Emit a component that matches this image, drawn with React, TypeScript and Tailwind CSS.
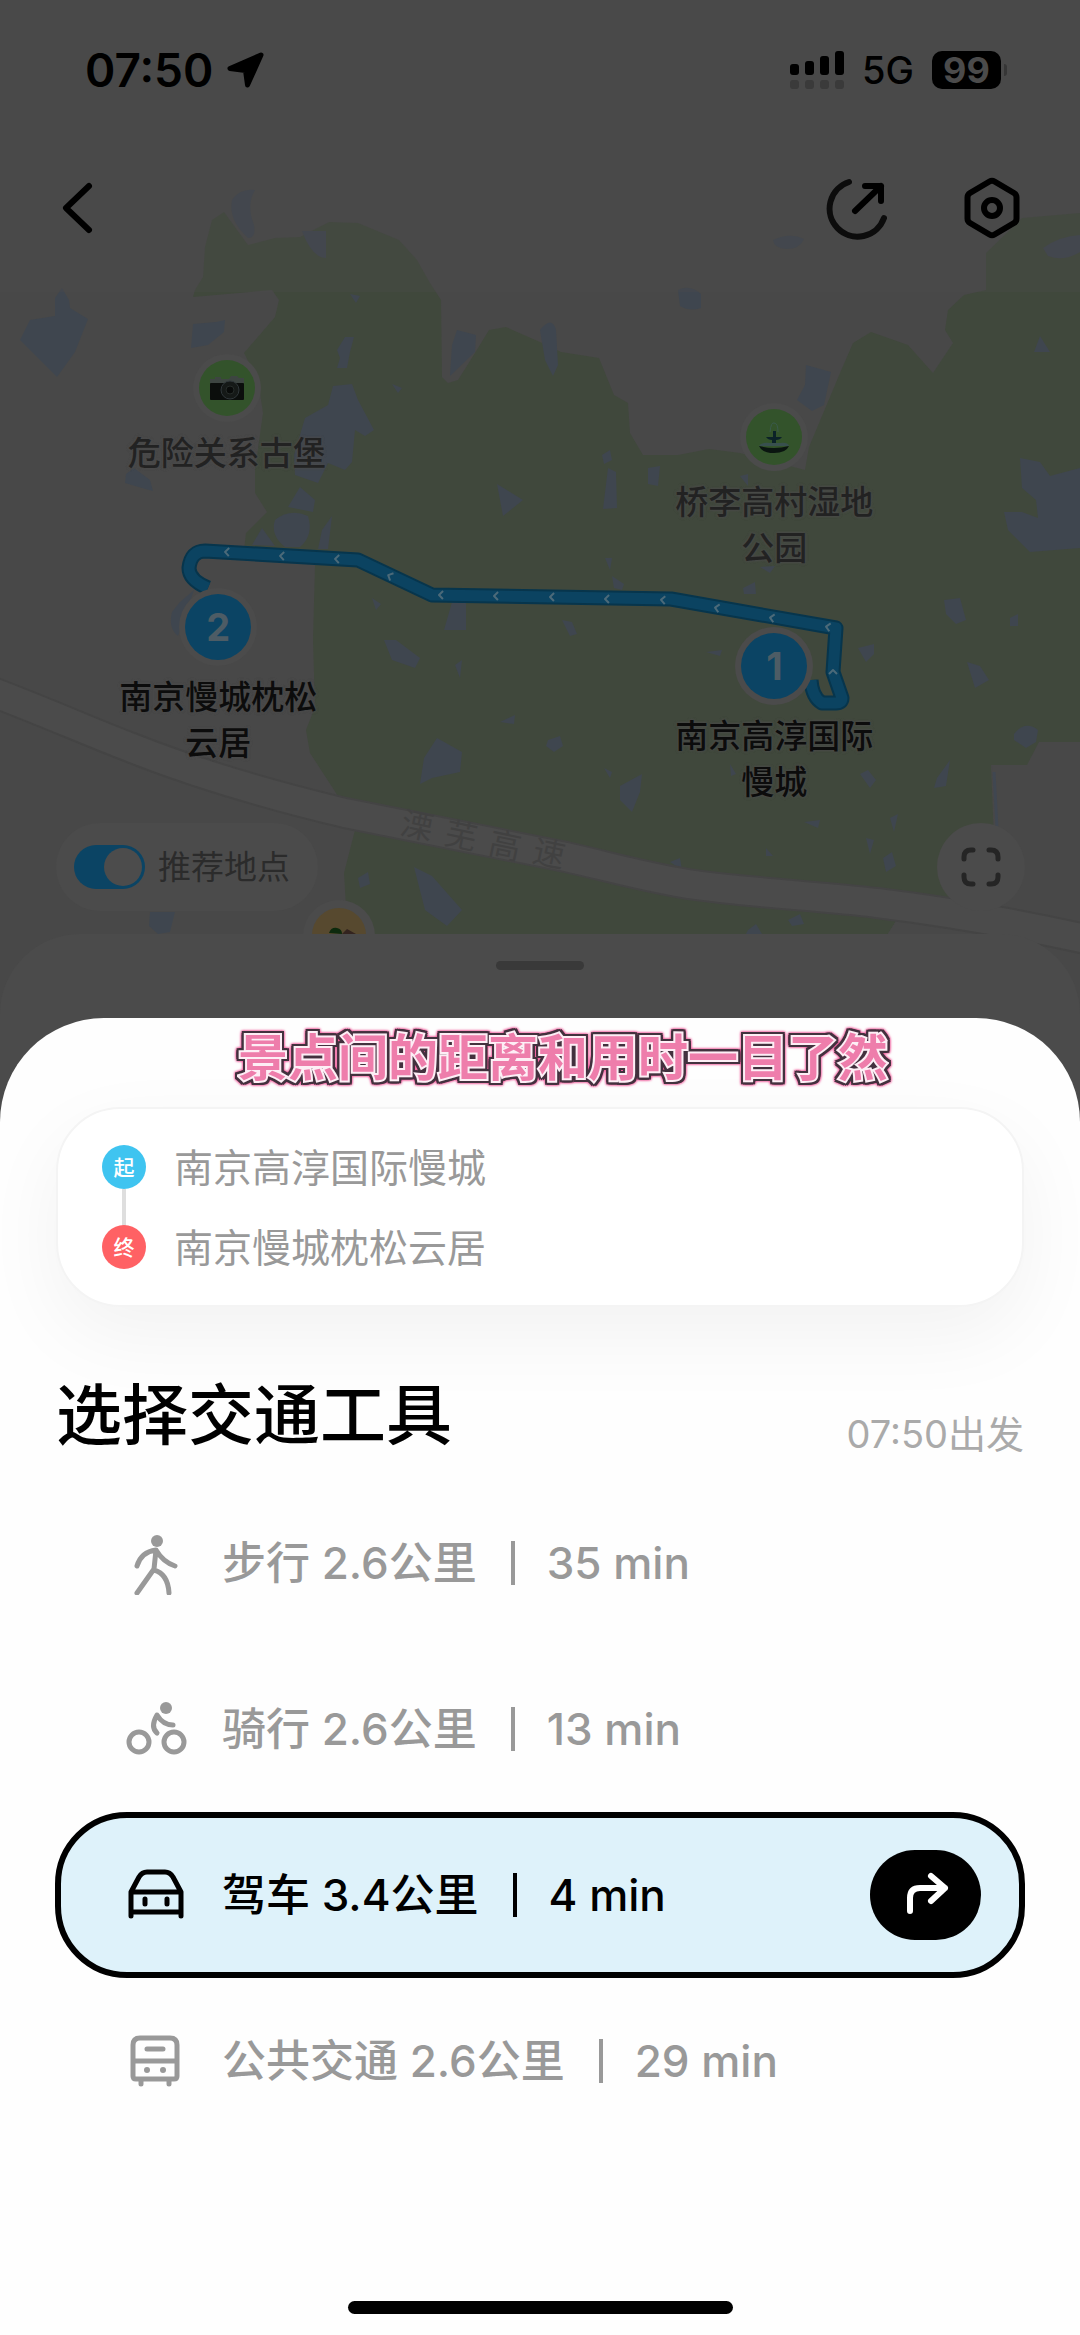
import React, { useState } from "react";

const WATER: string[] = [
  "M20 340 30 320 55 316 55 298 62 288 69 300 70 308 88 319 75 352 57 377Z",
  "M193 324 216 322 225 320 224 332 208 345 191 348Z",
  "M126 474 134 468 150 480 153 491 142 488 125 483Z",
  "M232 200Q240 188 255 190Q246 205 254 225Q256 238 248 238Q228 220 232 200Z",
  "M302 231H326V258Q312 258 302 231Z",
  "M773 240Q790 232 804 239Q800 249 786 249Q774 248 773 240Z",
  "M678 290Q690 284 701 294V308Q690 312 680 306Z",
  "M450 376 452 345 457 330 476 335 475 352Z",
  "M540 330Q552 315 556 330L558 365 553 376 545 360Z",
  "M806 365 831 372 824 405 812 411 797 400 805 385Z",
  "M337 350 345 337 354 337 350 352 347 368 337 368 340 358Z",
  "M333 386 352 384 358 400 374 430 365 436 355 430 352 462 345 470 328 463 318 483 295 475 294 455 305 418 328 405Z",
  "M300 487 315 500 313 512 288 507Z",
  "M275 520Q290 508 308 516Q314 535 300 547H285Q270 535 275 520Z",
  "M252 545 262 528 275 546Z",
  "M322 530 332 516 328 549 318 549Z",
  "M172 612 180 602 194 590 184 620 178 636Q168 628 172 612Z",
  "M392 384 402 388 398 393Z M350 294 360 296 356 303Z",
  "M497 484 523 500 503 516Z",
  "M372 598 381 604 376 610Z M452 602H466V630H444Z",
  "M384 640 396 640 420 658 415 668 392 660Z",
  "M455 665 462 660 460 678Z M500 722 515 715 514 724Z",
  "M437 738 462 752 460 772 432 778 420 784 424 758Z",
  "M414 867 432 876 462 910 447 926 425 910Z",
  "M358 878 368 872 370 884 360 888Z",
  "M602 455 610 450 612 460 604 464Z M608 468 616 472 617 508 603 509Z",
  "M648 468 660 466 658 486 648 484Z M740 476 748 474 748 486Z",
  "M605 558 612 558 610 570Z M612 576 624 584 622 590 614 588Z",
  "M743 588 755 582 756 594 744 594Z M760 567 775 566 770 573Z",
  "M562 620 572 622 577 634 570 636Z",
  "M1034 352 1040 336 1050 352Z",
  "M1020 458 1040 462 1050 476 1080 468V548L1030 552 1008 530 1004 512 1022 512 1038 518 1036 500 1022 488Z",
  "M944 600 960 598 966 620 956 624 946 614Z",
  "M1010 618 1018 614 1018 626 1010 626Z M706 652 722 650 720 656Z",
  "M858 648 874 644 874 654 866 662Z",
  "M967 662 980 666 989 680 975 688Z",
  "M1014 734Q1025 720 1038 730L1036 742 1026 748 1014 740Z",
  "M548 740 560 736 563 746 554 752 546 746Z",
  "M620 786 642 774 640 792 632 812 620 800Z",
  "M604 768 612 772 610 778Z M730 764 736 774 731 776Z",
  "M860 774 868 770 876 780 870 788Z M937 778 950 760 946 786 934 788Z",
  "M804 822 820 820 818 828Z M890 818 898 814 894 832Z M866 838 874 840 870 854Z",
  "M883 858 892 852 896 866 886 872Z M766 856 766 848 773 856Z M670 862 680 858 682 870Z",
  "M788 920 800 914 804 924 792 926Z M748 930 756 924 762 934H746Z",
  "M150 912H175L170 932 158 934 149 926Z",
  "M1043 248Q1060 236 1080 235V252Q1064 262 1048 256Z",
];

const ROAD =
  "M-10 691C60 718 90 732 132 748C200 775 270 795 345 813L566 857C610 867 640 876 688 884C750 893 820 896 877 903C950 912 1010 922 1090 940";

const ROUTE =
  "M208 588Q189 580 189 568Q191 551 205 551L358 560 432 595 671 599 836 628 833 672 842 698Q842 703 836 703H822Q812 697 811 680";

const CHEVRONS: [number, number, number][] = [
  [227, 552, 3], [282, 556, 3], [337, 559, 3], [390, 576, 25], [441, 595, 1],
  [496, 596, 1], [552, 597, 1], [607, 599, 1], [663, 600, 4], [717, 608, 10],
  [772, 618, 10], [828, 627, 10], [833, 672, 90],
];

function MapCanvas() {
  return (
    <svg
      viewBox="0 0 1080 1018"
      preserveAspectRatio="xMidYMin slice"
      className="absolute inset-0 h-full w-full"
      aria-hidden="true"
    >
      <rect width="1080" height="1018" fill="#484848" />
      <path
        d="M195 290 203 277 205 247 212 220 224 212 248 245 275 238 300 237 329 222 358 223 399 240 417 260 430 283 441 300 442 377 448 383 458 380 475 353 489 330 506 327 540 342 561 352 599 358 614 395 628 403 630 433 643 455 678 455 709 449 740 453 805 470 809 447 840 373 853 343 871 332 908 345 933 373 953 343 945 330 948 310 964 295 986 290V253L1022 218 1080 213V742H1039L1027 765H991L996 890 898 918 884 940H348L344 873 355 830 336 793 310 753 306 730 315 707 313 640 315 565 244 550 246 533 267 512 255 493V470L263 413 258 380 244 353 275 317 279 300 272 290 193 297Z"
        fill="#40483c"
      />
      <g fill="#3f464f">
        {WATER.map((d) => (
          <path key={d} d={d} />
        ))}
      </g>
      <path d="M992 765H1080V940H884L898 918 996 900Z" fill="#484848" />
      <path d="M994 772 997 828" stroke="#404751" strokeWidth="3" />
      <path d={ROAD} fill="none" stroke="#444" strokeWidth="32" />
      <path d={ROAD} fill="none" stroke="#4b4b4b" strokeWidth="28" />
      <g fontSize="32" fill="#414141" fontFamily='"Noto Sans CJK SC", sans-serif' textAnchor="middle">
        <text transform="translate(417 826) rotate(12)" y="11">溧</text>
        <text transform="translate(461 836) rotate(12)" y="11">芜</text>
        <text transform="translate(505 846) rotate(12)" y="11">高</text>
        <text transform="translate(549 854) rotate(12)" y="11">速</text>
      </g>
      <rect width="1080" height="292" fill="#4b4b4b" fillOpacity="0.3" />
      <g fill="none" strokeLinejoin="round">
        <path d={ROUTE} stroke="#07354c" strokeWidth="15" />
        <path d={ROUTE} stroke="#0b4361" strokeWidth="11" />
        {CHEVRONS.map(([x, y, r]) => (
          <path key={`${x}-${y}`} d="M2-4-2 0 2 4" transform={`translate(${x} ${y}) rotate(${r})`} stroke="#4c6a79" strokeWidth="2" />
        ))}
      </g>
      <circle cx="339" cy="936" r="36" fill="#4b4b4b" />
      <circle cx="339" cy="935" r="27" fill="#57492f" />
      <path d="M329 933Q331 927 337 928Q342 929 342 934Z" fill="#0d2a0d" />
      <path d="M342 934 347 929 356 934Z" fill="#33241f" />
    </svg>
  );
}

function Label({ lines, strong }: { lines: string[]; strong?: boolean }) {
  return (
    <div
      className={
        strong
          ? "text-center text-[33px] leading-[46px] font-medium text-[#0c0c0c] [text-shadow:0_0_3px_#4b4b4b,0_0_3px_#4b4b4b]"
          : "text-center text-[33px] leading-[46px] font-medium text-[#222] [text-shadow:0_0_3px_#4b4b4b,0_0_3px_#4b4b4b]"
      }
    >
      {lines.map((l) => (
        <div key={l} className="whitespace-nowrap">{l}</div>
      ))}
    </div>
  );
}

function Spot({ children }: { children: React.ReactNode }) {
  return (
    <div className="flex size-[68px] items-center justify-center rounded-full bg-[#4b4b4b]">
      <div className="flex size-14 items-center justify-center rounded-full bg-[#33532b]">{children}</div>
    </div>
  );
}

function Stop({ n }: { n: string }) {
  return (
    <div className="flex size-[78px] items-center justify-center rounded-full bg-[#4b4b4b]">
      <div className="flex size-[66px] items-center justify-center rounded-full bg-[#0b4464] text-[38px] leading-none font-bold text-[#4d5c65]">
        {n}
      </div>
    </div>
  );
}

function StatusBar() {
  return (
    <div className="flex h-[140px] items-center justify-between pr-[73px] pl-[85px] text-black">
      <div className="flex items-center gap-[14px]">
        <span className="text-[46px] leading-none font-semibold">07:50</span>
        <svg viewBox="0 0 38 38" className="size-[38px]" aria-label="定位">
          <path d="M34 4 3 17.500 18.500 19.500 20.500 34Z" fill="#000" stroke="#000" strokeWidth="5" strokeLinejoin="round" />
        </svg>
      </div>
      <div className="flex items-center">
        <svg viewBox="0 0 54 38" className="h-[38px] w-[54px]" aria-label="信号">
          <g fill="#000">
            <rect x="0" y="13" width="9" height="11" rx="3" />
            <rect x="15" y="10" width="9" height="14" rx="3" />
            <rect x="30" y="5" width="9" height="19" rx="3" />
            <rect x="45" y="0" width="9" height="24" rx="3" />
          </g>
          <g fill="#3a3a3a">
            <rect x="0" y="29" width="9" height="9" rx="3" />
            <rect x="15" y="29" width="9" height="9" rx="3" />
            <rect x="30" y="29" width="9" height="9" rx="3" />
            <rect x="45" y="29" width="9" height="9" rx="3" />
          </g>
        </svg>
        <span className="ml-[18px] text-[38px] leading-none font-medium">5G</span>
        <span className="ml-[18px] flex h-[38px] w-[69px] items-center justify-center rounded-[10px] bg-black text-[36px] leading-none font-bold text-[#4b4b4b]">
          99
        </span>
        <span className="ml-[3px] h-3 w-[3px] rounded-r-full bg-[#363636]" />
      </div>
    </div>
  );
}

function NavBar() {
  return (
    <nav className="flex h-[136px] items-center justify-between pr-[56px] pl-[44px]">
      <button type="button" aria-label="返回" className="flex size-16 items-center justify-center">
        <svg viewBox="0 0 64 64" className="size-16" fill="none" stroke="#000" strokeWidth="6" strokeLinecap="round" strokeLinejoin="round">
          <path d="M45 10 22 32 45 54" />
        </svg>
      </button>
      <div className="flex items-center gap-[70px]">
        <button type="button" aria-label="分享" className="size-16">
          <svg viewBox="0 0 64 64" className="size-16" fill="none" stroke="#000" strokeWidth="6" strokeLinecap="round" strokeLinejoin="round">
            <path d="M23 6A28 28 0 1 0 58 42" stroke="#0c0c0c" />
            <path d="M29 35 55 10M39 10H55V25" />
          </svg>
        </button>
        <button type="button" aria-label="设置" className="size-16">
          <svg viewBox="0 0 64 64" className="size-16" fill="none" stroke="#000" strokeWidth="6" strokeLinejoin="round">
            <path d="M29.500 5.500Q32 4 34.500 5.500L54 17Q56.500 18.500 56.500 21.500V42.500Q56.500 45.500 54 47L34.500 58.500Q32 60 29.500 58.500L10 47Q7.500 45.500 7.500 42.500V21.500Q7.500 18.500 10 17Z" />
            <circle cx="32" cy="32" r="8" />
          </svg>
        </button>
      </div>
    </nav>
  );
}

function WalkIcon() {
  return (
    <>
      <circle cx="34" cy="10" r="6" fill="currentColor" stroke="none" />
      <path d="M14 35Q18 21 33 19M33 19 31 38 14 62M33 19Q40 31 52 35M31 39Q45 43 46 62" />
    </>
  );
}

function BikeIcon() {
  return (
    <>
      <circle cx="43" cy="11" r="6" fill="currentColor" stroke="none" />
      <circle cx="16" cy="45" r="10" />
      <circle cx="51" cy="45" r="10" />
      <path d="M34 36Q27 30 34 18Q40 28 50 28" />
    </>
  );
}

function CarIcon() {
  return (
    <path d="M8 53V29L16 14Q19 9 24 9H42Q47 9 50 14L58 29V53M8 29H58M8 49H58M22 36V41M44 36V41" />
  );
}

function BusIcon() {
  return (
    <>
      <path d="M10 32V16Q10 9 17 9H47Q54 9 54 16V47Q54 50 51 50H13Q10 50 10 47ZM10 32H54M24 20H40M18 51V55M46 51V55" />
      <circle cx="24" cy="41" r="3" fill="currentColor" stroke="none" />
      <circle cx="40" cy="41" r="3" fill="currentColor" stroke="none" />
    </>
  );
}

const MODES = [
  { id: "walk", name: "步行", distance: "2.6公里", time: "35 min", Icon: WalkIcon },
  { id: "bike", name: "骑行", distance: "2.6公里", time: "13 min", Icon: BikeIcon },
  { id: "car", name: "驾车", distance: "3.4公里", time: "4 min", Icon: CarIcon },
  { id: "bus", name: "公共交通", distance: "2.6公里", time: "29 min", Icon: BusIcon },
];

export default function App() {
  const [mode, setMode] = useState("car");
  const [showSpots, setShowSpots] = useState(true);

  return (
    <main className="flex min-h-screen flex-col overflow-hidden bg-[#4b4b4b] font-[Inter,'Noto_Sans_CJK_SC',sans-serif]">
      <section className="relative flex h-[1018px] flex-col overflow-hidden">
        <MapCanvas />
        <div className="absolute top-[354px] left-[21%] flex -translate-x-1/2 flex-col items-center gap-2">
          <Spot>
            <svg viewBox="0 0 36 26" className="h-[26px] w-9">
              <path d="M1 8V4H6V2H12V4H20L22 1H28L30 3H35V8Z" fill="#3d4541" />
              <rect x="1" y="8" width="34" height="17" rx="1" fill="#0b0e0c" />
              <circle cx="21" cy="15" r="9" fill="#151917" stroke="#30373a" strokeWidth="1" />
              <circle cx="21" cy="15" r="4" fill="#090b0a" stroke="#252b28" strokeWidth="1" />
            </svg>
          </Spot>
          <Label lines={["危险关系古堡"]} />
        </div>
        <div className="absolute top-[403px] left-[71.7%] flex -translate-x-1/2 flex-col items-center gap-2">
          <Spot>
            <svg viewBox="0 0 36 36" className="size-9">
              <path d="M14 13Q15 3 18 4Q22 4 22 13" fill="none" stroke="#3a5a4c" strokeWidth="1" />
              <path d="M17 12H20V18H26Q24 21 20 21V26H16V21Q12 21 10 18H17Z" fill="#0b2228" />
              <path d="M3 27Q5 23 14 24H24Q32 23 33 27Z" fill="#38504e" />
              <path d="M3 27Q18 31 33 27Q30 34 18 34Q6 34 3 27Z" fill="#0a1510" />
            </svg>
          </Spot>
          <Label lines={["桥李高村湿地", "公园"]} />
        </div>
        <div className="absolute top-[588px] left-[20.2%] flex -translate-x-1/2 flex-col items-center gap-2">
          <Stop n="2" />
          <Label strong lines={["南京慢城枕松", "云居"]} />
        </div>
        <div className="absolute top-[627px] left-[71.7%] flex -translate-x-1/2 flex-col items-center gap-2">
          <Stop n="1" />
          <Label strong lines={["南京高淳国际", "慢城"]} />
        </div>

        <div className="relative">
          <StatusBar />
          <NavBar />
        </div>
        <div className="relative mt-auto flex items-center justify-between pr-[55px] pb-[23px] pl-14">
          <label className="flex h-[88px] items-center gap-[13px] rounded-full bg-[#4b4b4b] pr-7 pl-[18px]">
            <input
              type="checkbox"
              role="switch"
              checked={showSpots}
              onChange={(e) => setShowSpots(e.target.checked)}
              className="peer sr-only"
            />
            <span className="flex h-11 w-[71px] items-center rounded-full bg-[#222] p-[3px] peer-checked:justify-end peer-checked:bg-[#0b4464]">
              <span className="size-[38px] rounded-full bg-[#4c4c4c]" />
            </span>
            <span className="text-[33px] leading-none text-[#2b2b2b]">推荐地点</span>
          </label>
          <button type="button" aria-label="全屏" className="flex size-[88px] items-center justify-center rounded-full bg-[#4b4b4b]">
            <svg viewBox="0 0 40 40" className="size-10" fill="none" stroke="#252525" strokeWidth="5" strokeLinecap="round">
              <path d="M3 12V10Q3 3 10 3H12M28 3H30Q37 3 37 10V12M37 28V30Q37 37 30 37H28M12 37H10Q3 37 3 30V28" />
            </svg>
          </button>
        </div>
        <div className="relative flex h-[84px] justify-center rounded-t-[80px] bg-[#4b4b4b] pt-[27px]">
          <span className="h-[9px] w-[88px] rounded-full bg-[#393939]" />
        </div>
      </section>

      <section className="flex flex-1 flex-col rounded-t-[104px] bg-[#fefefe]">
        <p className="mt-2 mb-[17px] pl-[46px] text-center text-[50px] leading-[64px] font-bold text-[#ee7dab] [-webkit-text-stroke:4px_#fdeef5] [filter:drop-shadow(2px_0_0_#43313e)_drop-shadow(-2px_0_0_#43313e)_drop-shadow(0_2px_0_#43313e)_drop-shadow(0_-2px_0_#43313e)_drop-shadow(0_0_1px_#f05c9c)_drop-shadow(0_0_1px_#f05c9c)] [paint-order:stroke_fill]">
          景点间的距离和用时一目了然
        </p>

        <div className="mx-[56px] rounded-[64px] border-2 border-[#f4f4f4] bg-white px-11 py-[18px] shadow-[0_28px_80px_rgba(0,0,0,0.05)]">
          <ul className="relative flex flex-col">
            <li className="flex h-20 items-center gap-7">
              <span className="relative flex size-11 items-center justify-center rounded-full bg-[#3fc4f0] text-[21px] leading-none font-medium text-white">
                起
                <span className="absolute top-11 left-5 h-[38px] w-1 bg-[#dedede]" />
              </span>
              <span className="text-[39px] leading-none text-[#999]">南京高淳国际慢城</span>
            </li>
            <li className="flex h-20 items-center gap-7">
              <span className="relative flex size-11 items-center justify-center rounded-full bg-[#ff6164] text-[21px] leading-none font-medium text-white">
                终
              </span>
              <span className="text-[39px] leading-none text-[#999]">南京慢城枕松云居</span>
            </li>
          </ul>
        </div>

        <div className="mx-[56px] mt-[60px] flex items-end justify-between">
          <h1 className="text-[66px] leading-[96px] font-medium text-black">选择交通工具</h1>
          <span className="text-[38px] leading-[58px] text-[#aaa]">07:50出发</span>
        </div>

        <ul className="mx-[55px] mt-[17px] flex flex-col">
          {MODES.map(({ id, name, distance, time, Icon }) => {
            const active = id === mode;
            return (
              <li
                key={id}
                className={
                  active
                    ? "flex h-[166px] items-center rounded-[72px] border-6 border-black bg-[#def2fa] pr-[38px] pl-[62px] text-black"
                    : "flex h-[166px] items-center rounded-[72px] border-6 border-transparent pr-[38px] pl-[62px] text-[#999]"
                }
              >
                <button
                  type="button"
                  aria-pressed={active}
                  onClick={() => setMode(id)}
                  className="flex h-full flex-1 items-center text-left text-[44px] leading-none font-medium"
                >
                  <svg
                    viewBox="0 0 64 64"
                    className="size-16 shrink-0"
                    fill="none"
                    stroke="currentColor"
                    strokeWidth="5"
                    strokeLinecap="round"
                    strokeLinejoin="round"
                  >
                    <Icon />
                  </svg>
                  <span className="ml-[35px]">
                    {name} {distance}
                  </span>
                  <span className="mr-8 ml-[34px] h-11 w-1 bg-current" />
                  <span>{time}</span>
                </button>
                {active && (
                  <button type="button" aria-label="开始导航" className="flex h-[90px] w-[111px] items-center justify-center rounded-full bg-black">
                    <svg viewBox="0 0 111 90" className="h-[90px] w-[111px]" fill="none" stroke="#fff" strokeWidth="6" strokeLinecap="round" strokeLinejoin="round">
                      <path d="M40 61V48Q40 38 50 38H75M61 26 75 38 61 51" />
                    </svg>
                  </button>
                )}
              </li>
            );
          })}
        </ul>

        <div className="mt-auto mb-[21px] h-[13px] w-[385px] self-center rounded-full bg-black" />
      </section>
    </main>
  );
}
